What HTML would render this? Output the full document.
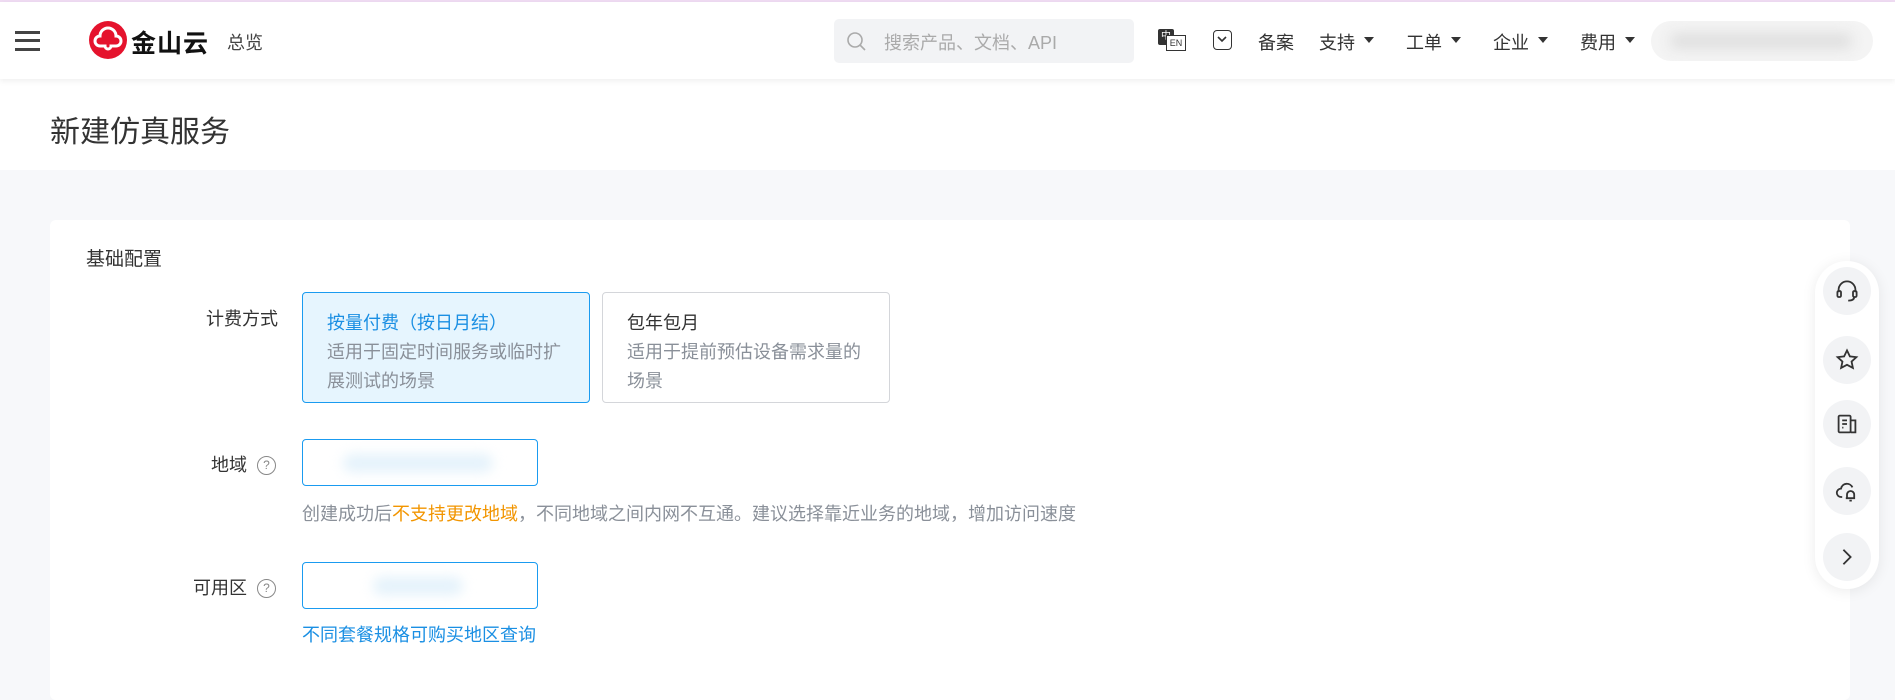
<!DOCTYPE html>
<html><head><meta charset="utf-8"><style>
*{margin:0;padding:0;box-sizing:border-box}
body{width:1895px;height:679px;overflow:hidden;background:#f7f8fa;font-family:"Liberation Sans","Noto Sans CJK SC",sans-serif;color:#333;position:relative}
.top{position:absolute;left:0;top:0;width:1895px;height:2px;background:#f0dcf3}
.hdr{position:absolute;left:0;top:2px;width:1895px;height:77px;background:#fff;box-shadow:0 2px 6px rgba(0,0,0,.07);z-index:2}
.abs{position:absolute}
.nav{position:absolute;top:27px;font-size:18px;color:#333}
.caret{position:absolute;top:35px;width:0;height:0;border-left:5px solid transparent;border-right:5px solid transparent;border-top:6px solid #333}
.titlebar{position:absolute;left:0;top:79px;width:1895px;height:91px;background:#fff}
.card{position:absolute;left:50px;top:220px;width:1800px;height:480px;background:#fff;border-radius:6px}
.lbl{position:absolute;font-size:18px;color:#333;text-align:right}
.opt{position:absolute;top:292px;width:288px;height:111px;border-radius:4px;padding:16px 0 0 24px;font-size:18px;line-height:29px}
.q{display:inline-block;width:19px;height:19px;border:1.5px solid #888;border-radius:50%;font-size:12px;line-height:16px;text-align:center;color:#888;vertical-align:2px;margin-left:10px}
.sel{position:absolute;left:302px;width:236px;height:47px;border:1px solid #1a9bf0;border-radius:4px;background:#fff;overflow:hidden}
.blur{position:absolute;left:40px;top:14px;width:150px;height:18px;background:#e4f2fb;border-radius:9px;filter:blur(6px)}
.panel{position:absolute;left:1815px;top:261px;width:64px;height:328px;background:#fff;border-radius:32px;box-shadow:0 2px 14px rgba(0,0,0,.08)}
.c{position:absolute;left:8px;width:48px;height:48px;border-radius:50%;background:#f2f3f5}
.c svg{position:absolute;left:12px;top:12px}
</style></head><body>
<div class="top"></div>
<div class="hdr">
  <div class="abs" style="left:15px;top:29px;width:25px;height:3px;background:#444"></div>
  <div class="abs" style="left:15px;top:37px;width:25px;height:3px;background:#444"></div>
  <div class="abs" style="left:15px;top:46px;width:25px;height:3px;background:#444"></div>
  <div class="abs" style="left:89px;top:19px;width:38px;height:38px;border-radius:50%;background:#e5132d">
    <svg width="38" height="38" viewBox="0 0 38 38"><path d="M11 25a5 5 0 0 1 0-10a8 8 0 0 1 16 0a5 5 0 0 1 0 10h-5a3 3 0 0 1-6 0z" fill="none" stroke="#fff" stroke-width="3"/></svg>
  </div>
  <div class="abs" style="left:131px;top:22px;font-size:25px;font-weight:bold;color:#111;letter-spacing:1px">金山云</div>
  <div class="nav" style="left:227px;color:#444">总览</div>
  <div class="abs" style="left:834px;top:17px;width:300px;height:44px;background:#f2f3f5;border-radius:5px">
    <svg class="abs" style="left:12px;top:12px" width="22" height="22" viewBox="0 0 22 22"><circle cx="9" cy="9" r="7" fill="none" stroke="#aaa" stroke-width="1.6"/><path d="M14 14l5 5" stroke="#aaa" stroke-width="1.6"/></svg>
    <div class="abs" style="left:50px;top:10px;font-size:18px;color:#aaa">搜索产品、文档、API</div>
  </div>
  <div class="abs" style="left:1158px;top:27px;width:16px;height:16px;background:#333;border-radius:2px;color:#fff;font-size:10px;text-align:center;line-height:16px">中</div>
  <div class="abs" style="left:1166px;top:33px;width:20px;height:16px;border:1px solid #333;background:#fff;font-size:9px;line-height:14px;text-align:center;color:#333">EN</div>
  <div class="abs" style="left:1213px;top:28px;width:19px;height:20px;border:1.8px solid #333;border-radius:4px"><svg class="abs" style="left:3px;top:4px" width="10" height="8"><path d="M1 2l4 4l4-4" fill="none" stroke="#333" stroke-width="1.6"/></svg></div>
  <div class="nav" style="left:1258px">备案</div>
  <div class="nav" style="left:1319px">支持</div><div class="caret" style="left:1364px"></div>
  <div class="nav" style="left:1406px">工单</div><div class="caret" style="left:1451px"></div>
  <div class="nav" style="left:1493px">企业</div><div class="caret" style="left:1538px"></div>
  <div class="nav" style="left:1580px">费用</div><div class="caret" style="left:1625px"></div>
  <div class="abs" style="left:1651px;top:19px;width:222px;height:40px;border-radius:20px;background:#f4f4f4;overflow:hidden"><div class="abs" style="left:20px;top:13px;width:180px;height:14px;background:#dcdcdc;filter:blur(7px)"></div></div>
</div>
<div class="titlebar"><div class="abs" style="left:50px;top:28px;font-size:30px;color:#333">新建仿真服务</div></div>
<div class="card"></div>
<div class="abs" style="left:86px;top:244px;font-size:19px;color:#333">基础配置</div>
<div class="lbl" style="left:178px;top:305px;width:100px">计费方式</div>
<div class="opt" style="left:302px;background:#e6f5fe;border:1px solid #1a9bf0"><div style="color:#1a8fe3">按量付费（按日月结）</div><div style="color:#8a9099">适用于固定时间服务或临时扩<br>展测试的场景</div></div>
<div class="opt" style="left:602px;background:#fff;border:1px solid #d4d6da"><div style="color:#333">包年包月</div><div style="color:#8a9099">适用于提前预估设备需求量的<br>场景</div></div>
<div class="lbl" style="left:176px;top:451px;width:100px">地域<span class="q">?</span></div>
<div class="sel" style="top:439px"><div class="blur"></div></div>
<div class="abs" style="left:302px;top:500px;font-size:18px;color:#8a9099">创建成功后<span style="color:#f29500">不支持更改地域</span>，不同地域之间内网不互通。建议选择靠近业务的地域，增加访问速度</div>
<div class="lbl" style="left:176px;top:574px;width:100px">可用区<span class="q">?</span></div>
<div class="sel" style="top:562px"><div class="blur" style="left:70px;width:90px"></div></div>
<div class="abs" style="left:302px;top:621px;font-size:18px;color:#1a8fe3">不同套餐规格可购买地区查询</div>
<div class="panel">
  <div class="c" style="top:6px"><svg width="24" height="24" viewBox="0 0 20 20" fill="none" stroke="#333" stroke-width="1.5"><path d="M3 11V9a7 7 0 0 1 14 0v2"/><rect x="2" y="10" width="3" height="5" rx="1"/><rect x="15" y="10" width="3" height="5" rx="1"/><path d="M16 15c0 2-2 3-5 3"/></svg></div>
  <div class="c" style="top:75px"><svg width="24" height="24" viewBox="0 0 20 20" fill="none" stroke="#333" stroke-width="1.5"><path d="M10 2l2.4 5 5.4.6-4 3.7 1.1 5.3L10 14l-4.9 2.6 1.1-5.3-4-3.7 5.4-.6z"/></svg></div>
  <div class="c" style="top:139px"><svg width="24" height="24" viewBox="0 0 20 20" fill="none" stroke="#333" stroke-width="1.5"><rect x="3" y="3" width="10" height="14" rx="1"/><path d="M13 7h4v10h-4M6 7h4M6 10h4M6 13h1"/></svg></div>
  <div class="c" style="top:206px"><svg width="24" height="24" viewBox="0 0 20 20" fill="none" stroke="#333" stroke-width="1.5"><path d="M6 15H5a3.5 3.5 0 0 1 0-7a5 5 0 0 1 9.5-1M10 16v-3a3 3 0 0 1 6 0v3h-7M12 18h2"/></svg></div>
  <div class="c" style="top:272px"><svg width="24" height="24" viewBox="0 0 20 20" fill="none" stroke="#333" stroke-width="1.5"><path d="M7 4l6 6-6 6"/></svg></div>
</div>
</body></html>
